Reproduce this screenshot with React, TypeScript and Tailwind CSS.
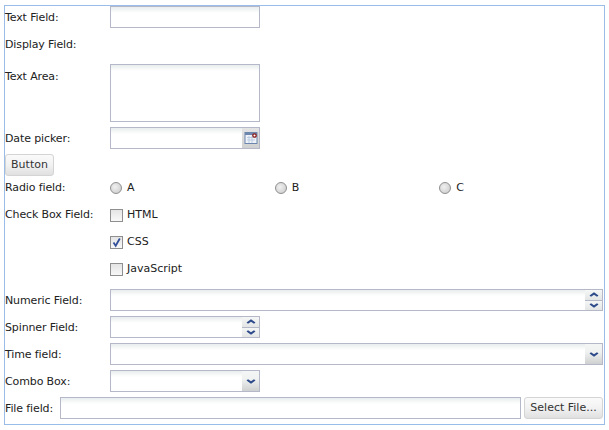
import type { ReactNode } from "react";

const inputCls =
  "h-[22px] border border-[#b5b8c8] bg-[linear-gradient(#e9eded,#ffffff_6px)]";
const triggerCls =
  "w-[18px] shrink-0 border-b border-r border-t border-[#b5b8c8] bg-[linear-gradient(#f4f5f5,#f0f1f1_40%,#cfd0d0)] flex items-center justify-center";

function Row({ label, children, className, labelClass }: { label: string; children?: ReactNode; className?: string; labelClass?: string }) {
  return (
    <div className={`flex ${className ?? ""}`}>
      <label className={`h-[22px] w-[105px] shrink-0 tracking-[-0.12px] ${labelClass ?? "pt-px"}`}>{label}</label>
      {children}
    </div>
  );
}

function Chevron({ up }: { up?: boolean }) {
  return (
    <svg width="10" height="5" viewBox="0 0 10 5" className={`shrink-0 ${up ? "rotate-180" : ""}`}>
      <polygon points="0.5,1.5 2,0.2 5,2.3 8,0.2 9.5,1.5 5,4.8" fill="#2d4a8a" />
    </svg>
  );
}

function Spin() {
  return (
    <div className="flex w-[18px] shrink-0 flex-col border-b border-r border-t border-[#b5b8c8]">
      <div className="flex h-[10px] flex-1 items-center justify-center border-b border-[#b5b8c8] bg-[linear-gradient(#f5f6f6,#e4e5e5)]">
        <Chevron up />
      </div>
      <div className="flex h-[10px] flex-1 items-center justify-center bg-[linear-gradient(#f5f6f6,#e4e5e5)]">
        <Chevron />
      </div>
    </div>
  );
}

function Radio({ text }: { text: string }) {
  return (
    <div className="flex w-[165px] items-center gap-[5px]">
      <span className="h-3 w-3 rounded-full border border-[#8f8f8f] bg-[radial-gradient(circle_at_40%_40%,#f0f0f0,#c8c8c8)]" />
      <span>{text}</span>
    </div>
  );
}

function Check({ text, checked, className }: { text: string; checked?: boolean; className?: string }) {
  return (
    <div className={`flex items-center gap-1 ${className ?? ""}`}>
      <span className="flex h-[13px] w-[13px] items-center justify-center border border-[#8f8f8f] bg-[linear-gradient(#e4e4e4,#f8f8f8)]">
        {checked && (
          <svg width="11" height="11" viewBox="0 0 11 11">
            <path d="M2.5 5.5 L4.7 8.8 L8.8 1.5" fill="none" stroke="#33509a" strokeWidth="1.8" />
          </svg>
        )}
      </span>
      <span>{text}</span>
    </div>
  );
}

export default function App() {
  return (
    <div className="h-[430px] w-[609px] bg-white pl-1 pr-1 pt-[5px] font-['DejaVu_Sans',sans-serif] text-[11px] leading-[22px] text-[#222]">
      <div className="h-[420px] w-[601px] border border-[#99bce8] bg-white">
        <Row label="Text Field:">
          <div className={`w-[150px] ${inputCls}`} />
        </Row>
        <Row label="Display Field:" className="mt-[5px]" />
        <Row label="Text Area:" className="mt-[9px]" labelClass="pt-[2px]">
          <div className="h-[58px] w-[150px] border border-[#b5b8c8] bg-[linear-gradient(#e9eded,#ffffff_6px)]" />
        </Row>
        <Row label="Date picker:" className="mt-[5px]">
          <div className="flex w-[150px]">
            <div className={`min-w-0 flex-1 border-r-0 ${inputCls}`} />
            <div className={`${triggerCls} !bg-[linear-gradient(#e4e4e4,#cfd0d0)]`}>
              <svg width="14" height="14" viewBox="0 0 14 14">
                <rect x="1" y="1.5" width="12" height="11" fill="#eef3fa" stroke="#6d86ad" />
                <rect x="1" y="1.5" width="12" height="2.5" fill="#6d86ad" />
                <path d="M3 6.5H11M3 9H11M5 5V12M8 5V12" stroke="#bccbe0" />
                <circle cx="10.5" cy="4.5" r="1.7" fill="#fff" stroke="#8c1a1a" strokeWidth="1.3" />
              </svg>
            </div>
          </div>
        </Row>
        <div className="mt-[5px]">
          <button className="block h-[22px] w-[49px] rounded-[3px] border border-[#d4d4d4] bg-[linear-gradient(#fafafa,#f2f2f2_50%,#e0e0e0)] text-[11px] leading-[20px] text-[#333]">
            Button
          </button>
        </div>
        <Row label="Radio field:" className="mt-[1px]" labelClass="pt-0">
          <Radio text="A" />
          <Radio text="B" />
          <Radio text="C" />
        </Row>
        <Row label="Check Box Field:" className="mt-[5px]" labelClass="pt-0">
          <div className="flex flex-col">
            <Check text="HTML" />
            <Check text="CSS" checked className="mt-[5px]" />
            <Check text="JavaScript" className="mt-[5px]" />
          </div>
        </Row>
        <Row label="Numeric Field:" className="mt-[9px]">
          <div className="flex h-[22px] w-[493px]">
            <div className={`min-w-0 flex-1 border-r-0 ${inputCls}`} />
            <Spin />
          </div>
        </Row>
        <Row label="Spinner Field:" className="mt-[5px]">
          <div className="flex h-[22px] w-[150px]">
            <div className={`min-w-0 flex-1 border-r-0 ${inputCls}`} />
            <Spin />
          </div>
        </Row>
        <Row label="Time field:" className="mt-[5px]">
          <div className="flex h-[22px] w-[493px]">
            <div className={`min-w-0 flex-1 border-r-0 ${inputCls}`} />
            <div className={triggerCls}>
              <Chevron />
            </div>
          </div>
        </Row>
        <Row label="Combo Box:" className="mt-[5px]">
          <div className="flex h-[22px] w-[150px]">
            <div className={`min-w-0 flex-1 border-r-0 ${inputCls}`} />
            <div className={triggerCls}>
              <Chevron />
            </div>
          </div>
        </Row>
        <div className="mt-[5px] flex">
          <label className="h-[22px] w-[55px] shrink-0 pt-px tracking-[-0.12px]">File field:</label>
          <div className={`w-[461px] ${inputCls}`} />
          <button className="ml-[3px] h-[22px] w-[79px] rounded-[3px] border border-[#d4d4d4] bg-[linear-gradient(#fafafa,#f2f2f2_50%,#e0e0e0)] text-[11px] leading-[20px] text-[#333]">
            Select File...
          </button>
        </div>
      </div>
    </div>
  );
}
